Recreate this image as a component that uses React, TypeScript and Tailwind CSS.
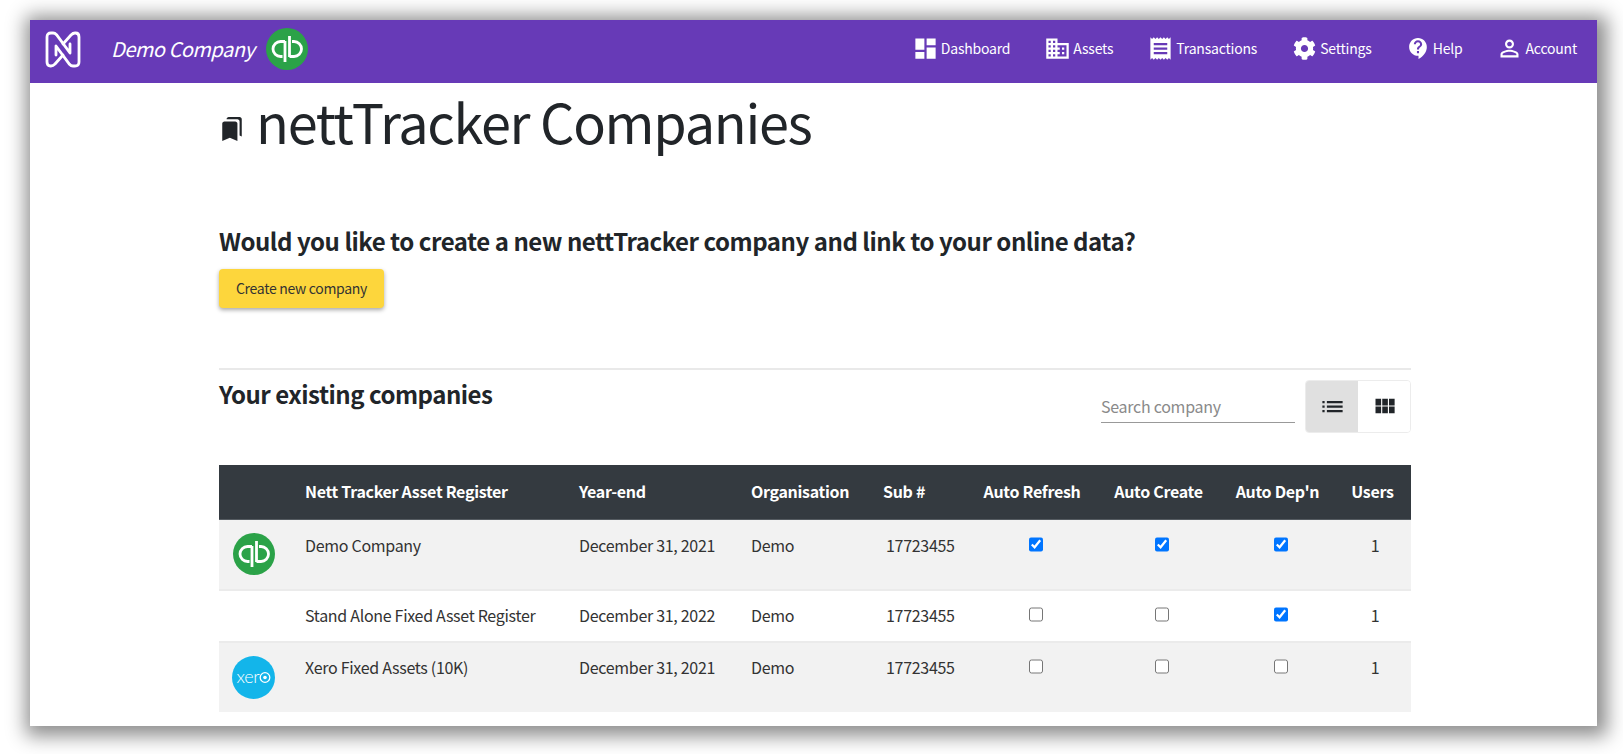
import type { ReactNode } from 'react';
import { FaCog } from 'react-icons/fa';

const font = 'font-["Noto_Sans_CJK_SC","Source_Sans_Pro","Noto_Sans",sans-serif]';

const navItems: { label: string; path?: string; className: string }[] = [
  {
    label: 'Dashboard',
    className: 'w-[27px] h-[27px]',
    path: 'M3 13h8V3H3v10zm0 8h8v-6H3v6zm10 0h8V11h-8v10zm0-18v6h8V3h-8z',
  },
  {
    label: 'Assets',
    className: 'w-[27px] h-[27px]',
    path: 'M12 7V3H2v18h20V7H12zM6 19H4v-2h2v2zm0-4H4v-2h2v2zm0-4H4V9h2v2zm0-4H4V5h2v2zm4 12H8v-2h2v2zm0-4H8v-2h2v2zm0-4H8V9h2v2zm0-4H8V5h2v2zm10 12h-8v-2h2v-2h-2v-2h2v-2h-2V9h8v10zm-2-8h-2v2h2v-2zm0 4h-2v2h2v-2z',
  },
  {
    label: 'Transactions',
    className: 'w-[27px] h-[27px]',
    path: 'M18 17H6v-2h12v2zm0-4H6v-2h12v2zm0-4H6V7h12v2zM3 22l1.5-1.5L6 22l1.5-1.5L9 22l1.5-1.5L12 22l1.5-1.5L15 22l1.5-1.5L18 22l1.5-1.5L21 22V2l-1.5 1.5L18 2l-1.5 1.5L15 2l-1.5 1.5L12 2l-1.5 1.5L9 2 7.5 3.5 6 2 4.5 3.5 3 2v20z',
  },
  { label: 'Settings', className: 'w-[23px] h-[23px] mx-[2px]' },
  {
    label: 'Help',
    className: 'w-[25px] h-[25px]',
    path: 'M11.5 2C6.81 2 3 5.81 3 10.5S6.81 19 11.5 19h.5v3c4.86-2.34 8-7 8-11.5C20 5.81 16.19 2 11.5 2zm1 14.5h-2v-2h2v2zm0-3.5h-2c0-3.25 3-3 3-5 0-1.1-.9-2-2-2s-2 .9-2 2h-2c0-2.21 1.79-4 4-4s4 1.79 4 4c0 2.5-3 2.75-3 5z',
  },
  {
    label: 'Account',
    className: 'w-[27px] h-[27px]',
    path: 'M12 5.9c1.16 0 2.1.94 2.1 2.1s-.94 2.1-2.1 2.1S9.9 9.16 9.9 8s.94-2.1 2.1-2.1m0 9c2.97 0 6.1 1.46 6.1 2.1v1.1H5.9V17c0-.64 3.13-2.1 6.1-2.1M12 4C9.79 4 8 5.79 8 8s1.79 4 4 4 4-1.79 4-4-1.79-4-4-4zm0 9c-2.67 0-8 1.34-8 4v3h16v-3c0-2.66-5.33-4-8-4z',
  },
];

const rows = [
  { logo: 'qb', name: 'Demo Company', yearEnd: 'December 31, 2021', checks: [true, true, true], rowClass: 'h-[71px] bg-[#f2f2f2]', textPad: 'pt-[13px]', checkPad: 'pt-[17px]' },
  { logo: '', name: 'Stand Alone Fixed Asset Register', yearEnd: 'December 31, 2022', checks: [false, false, true], rowClass: 'h-[52px] bg-white', textPad: 'pt-[12px]', checkPad: 'pt-[16px]' },
  { logo: 'xero', name: 'Xero Fixed Assets (10K)', yearEnd: 'December 31, 2021', checks: [false, false, false], rowClass: 'h-[70px] bg-[#f2f2f2]', textPad: 'pt-[12px]', checkPad: 'pt-[16px]' },
];

const Icon = ({ path, className }: { path: string; className: string }) => (
  <svg viewBox="0 0 24 24" fill="currentColor" className={className}>
    <path d={path} />
  </svg>
);

const NettLogo = () => (
  <svg viewBox="0 0 36 37" fill="none" stroke="white" strokeWidth="2.8" strokeLinejoin="round" strokeLinecap="round" className="h-[37px] w-9">
    <path d="M18 24 L10 33 Q8 35 6 35 H5.5 Q2 35 2 31 V6 Q2 2 6 2 H8 Q10 2 11.5 3.7 L25 22 V13" />
    <path d="M18 13 L26 4 Q28 2 30 2 H30.5 Q34 2 34 6 V31 Q34 35 30 35 H28 Q26 35 24.5 33.3 L11 15 V24" />
  </svg>
);

const QbLogo = () => (
  <svg viewBox="0 0 42 42" className="h-[42px] w-[42px]">
    <circle cx="21" cy="21" r="21" fill="#2ba248" />
    <g fill="none" stroke="white" strokeWidth="2.8">
      <path d="M19 13.5 H14.5 a7 7 0 0 0 0 15 H16.5" />
      <path d="M19 13 V34" />
      <path d="M23.5 28.5 H28 a7 7 0 0 0 0 -15 H26" />
      <path d="M23.5 8 V29" />
    </g>
  </svg>
);

const XeroLogo = () => (
  <svg viewBox="0 0 43 43" className="h-[43px] w-[43px]">
    <circle cx="21.5" cy="21.5" r="21.5" fill="#13b5ea" />
    <text x="4.5" y="27" fill="white" fontSize="18" fontWeight="300" fontFamily="Lato, sans-serif">xer</text>
    <circle cx="33" cy="21.5" r="4.8" fill="none" stroke="white" strokeWidth="1.3" />
    <circle cx="33" cy="21.5" r="1.8" fill="white" />
  </svg>
);

const Th = ({ children, className }: { children?: ReactNode; className: string }) => (
  <th className={`pb-[2px] text-[16px] font-bold tracking-[-0.3px] text-white ${className}`}>{children}</th>
);

export default function App() {
  return (
    <div className={`h-[754px] w-[1623px] overflow-hidden bg-white pt-[20px] pl-[30px] ${font}`}>
      <div className="h-[706px] w-[1567px] bg-white shadow-[3px_3px_18px_7px_rgba(0,0,0,0.45)]">
        <header className="flex h-[63px] items-center bg-[#673ab7] pb-[5px] text-white">
          <div className="ml-[15px]">
            <NettLogo />
          </div>
          <span className="ml-[30px] text-[20px] tracking-[-0.5px] italic">Demo Company</span>
          <div className="ml-[12px]">
            <QbLogo />
          </div>
          <nav className="mr-[20px] mb-[2px] ml-auto flex items-center gap-[34px]">
            {navItems.map((item) => (
              <a key={item.label} className="flex items-center gap-[2px] text-[14px] tracking-[-0.2px]">
                {item.path ? <Icon path={item.path} className={item.className} /> : <FaCog className={item.className} />}
                {item.label}
              </a>
            ))}
          </nav>
        </header>

        <main className="ml-[189px] w-[1192px] text-[#212529]">
          <div className="flex h-[76px] items-center">
            <Icon
              path="M19 18l2 1V3c0-1.1-.9-2-2-2H8.99C7.89 1 7 1.9 7 3h10c1.1 0 2 .9 2 2v13zM15 5H5c-1.1 0-2 .9-2 2v16l7-3 7 3V7c0-1.1-.9-2-2-2z"
              className="mt-[16px] h-[26px] w-[26px]"
            />
            <h1 className="ml-[11px] text-[54px] leading-none font-normal tracking-[-1.3px]">nettTracker Companies</h1>
          </div>

          <h2 className="mt-[64px] text-[24px] leading-[36px] font-bold tracking-[-0.47px]">
            Would you like to create a new nettTracker company and link to your online data?
          </h2>
          <button className="mt-[10px] h-[39px] w-[165px] rounded-[4px] bg-[#fdd63c] text-[14px] tracking-[-0.3px] text-[#333] shadow-[0_2px_4px_rgba(0,0,0,0.35)]">
            Create new company
          </button>

          <div className="mt-[60px] border-t-2 border-[#e9e9e9]">
            <div className="flex items-start justify-between">
              <h3 className="mt-[8px] text-[24px] leading-[32px] font-bold tracking-[-0.5px]">Your existing companies</h3>
              <div className="mt-[10px] flex items-start gap-[10px]">
                <input
                  placeholder="Search company"
                  className="mt-[10px] h-[33px] w-[194px] border-b border-[#999] bg-transparent text-[16px] tracking-[-0.28px] outline-none placeholder:text-[#8a8a8a]"
                />
                <div className="flex h-[53px] w-[106px] overflow-hidden rounded-[4px] border border-[#ececec]">
                  <button className="flex w-[52px] items-center justify-center bg-[#e0e0e0]">
                    <Icon path="M3 13h2v-2H3v2zm0 4h2v-2H3v2zm0-8h2V7H3v2zm4 4h14v-2H7v2zm0 4h14v-2H7v2zM7 7v2h14V7H7z" className="h-[27px] w-[27px]" />
                  </button>
                  <button className="flex flex-1 items-center justify-center bg-white">
                    <Icon path="M4 11h5V5H4v6zm0 7h5v-6H4v6zm6 0h5v-6h-5v6zm6 0h5v-6h-5v6zm-6-7h5V5h-5v6zm6-6v6h5V5h-5z" className="h-[27px] w-[27px]" />
                  </button>
                </div>
              </div>
            </div>

            <table className="mt-[32px] w-[1192px] table-fixed border-collapse">
              <thead>
                <tr className="h-[54px] border-b border-[#555b61] bg-[#343a40]">
                  <Th className="w-[74px]" />
                  <Th className="w-[274px] pl-[12px] text-left">Nett Tracker Asset Register</Th>
                  <Th className="w-[172px] pl-[12px] text-left">Year-end</Th>
                  <Th className="w-[132px] pl-[12px] text-left">Organisation</Th>
                  <Th className="w-[100px] pl-[12px] text-left">Sub #</Th>
                  <Th className="w-[131px] pr-[9px] text-center">Auto Refresh</Th>
                  <Th className="w-[121px] pr-[8px] text-center">Auto Create</Th>
                  <Th className="w-[117px] pr-[8px] text-center">Auto Dep'n</Th>
                  <Th className="w-[71px] pr-[6px] text-center">Users</Th>
                </tr>
              </thead>
              <tbody className="text-[16px] tracking-[-0.3px] text-[#333]">
                {rows.map((row) => (
                  <tr key={row.name} className={`${row.rowClass} border-b-2 border-[#ebebeb] last:border-b-0`}>
                    <td className={row.logo === 'qb' ? 'pl-[14px]' : 'pl-[13px]'}>
                      {row.logo === 'qb' && <QbLogo />}
                      {row.logo === 'xero' && <XeroLogo />}
                    </td>
                    <td className={`${row.textPad} pl-[12px] align-top`}>{row.name}</td>
                    <td className={`${row.textPad} pl-[12px] align-top`}>{row.yearEnd}</td>
                    <td className={`${row.textPad} pl-[12px] align-top`}>Demo</td>
                    <td className={`${row.textPad} pl-[15px] align-top`}>17723455</td>
                    {row.checks.map((checked, i) => (
                      <td key={i} className={`${row.checkPad} pr-[2px] align-top`}>
                        <input type="checkbox" defaultChecked={checked} className="mx-auto block h-[15px] w-[14px]" />
                      </td>
                    ))}
                    <td className={`${row.textPad} pr-[1px] text-center align-top`}>1</td>
                  </tr>
                ))}
              </tbody>
            </table>
          </div>
        </main>
      </div>
    </div>
  );
}
